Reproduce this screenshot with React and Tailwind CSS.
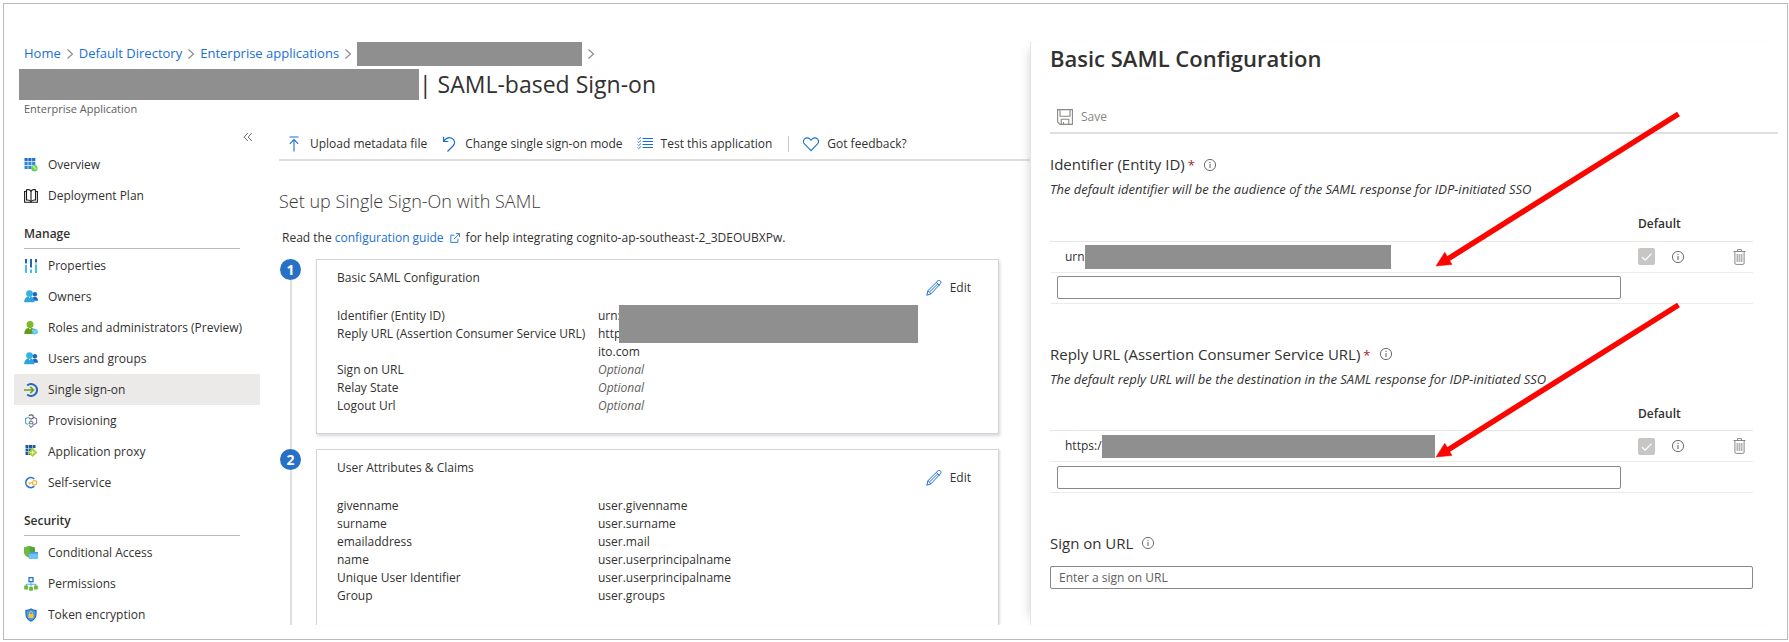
import React from "react";

const blue = "#1a6fd4";

function Redacted({ className }) {
  return <span aria-hidden="true" className={"block shrink-0 bg-[#8f8f8f] " + className} />;
}

function Chevron() {
  return (
    <svg className="h-3 w-2 shrink-0" viewBox="0 0 8 12" fill="none" stroke="#8a8886" strokeWidth="1.1" aria-hidden="true">
      <path d="M1.5 1.5 6.5 6l-5 4.5" />
    </svg>
  );
}

function Info() {
  return (
    <svg className="h-[14px] w-[14px] shrink-0" viewBox="0 0 14 14" fill="none" stroke="#605e5c" aria-hidden="true">
      <circle cx="7" cy="7" r="5.6" strokeWidth="0.9" />
      <path d="M7 6v4" strokeWidth="1" />
      <path d="M7 3.8v1.2" strokeWidth="1" />
    </svg>
  );
}

const svgProps = { className: "h-[14px] w-[14px] shrink-0", viewBox: "0 0 14 14", fill: "none", "aria-hidden": true };

const icons = {
  overview: (
    <svg {...svgProps}>
      <g fill="#1d6fd0">
        <rect x="0.5" y="0" width="3.2" height="3.2" /><rect x="4.3" y="0" width="3.2" height="3.2" /><rect x="8.1" y="0" width="3.2" height="3.2" />
      </g>
      <g fill="#2f86dd">
        <rect x="0.5" y="3.9" width="3.2" height="3.2" /><rect x="4.3" y="3.9" width="3.2" height="3.2" /><rect x="8.1" y="3.9" width="3.2" height="3.2" />
        <rect x="0.5" y="7.8" width="3.2" height="3.2" /><rect x="4.3" y="7.8" width="3.2" height="3.2" />
      </g>
      <circle cx="10.4" cy="10.2" r="3.2" fill="#5fcf6a" />
      <path d="m9.4 8.400 2.400 2.600" stroke="#c9f25c" strokeWidth="1.600" strokeLinecap="round" />
    </svg>
  ),
  plan: (
    <svg {...svgProps} stroke="#1b1a19" strokeWidth="1.1">
      <path d="M2.500.8c2-.4 3.700 0 4.500 1.300C7.800.8 9.500.4 11.500.8v10.200c-2-.2-3.500.2-4.500 1.600-1-1.400-2.500-1.800-4.500-1.600z" />
      <path d="M7 2.100v10.500M2.500 2.500H.6v10.800h12.800V2.500h-1.900" />
    </svg>
  ),
  properties: (
    <svg {...svgProps}>
      <g fill="#1f66b8">
        <rect x="1" y="0" width="2" height="4" /><rect x="6" y="0" width="2" height="8.5" /><rect x="11" y="0" width="2" height="3.5" />
      </g>
      <g fill="#46bfe6">
        <rect x="1" y="6" width="2" height="8" /><rect x="6" y="10.5" width="2" height="3.5" /><rect x="11" y="5.5" width="2" height="8.5" />
      </g>
      <rect x="1" y="4" width="2" height="1.2" fill="#8fc8ee" /><rect x="11" y="3.5" width="2" height="1.2" fill="#8fc8ee" />
    </svg>
  ),
  people: (
    <svg {...svgProps}>
      <circle cx="10.9" cy="4.3" r="2.2" fill="#1c66c4" />
      <path d="M7.8 10.800c0-2.600 1.200-4 3.100-4s3.100 1.600 3.100 4z" fill="#1c66c4" />
      <circle cx="5.500" cy="3.600" r="3.400" fill="#35b2e0" />
      <path d="M.2 12.200c0-3.600 2-5.600 5.300-5.600s5 2 5 5.600z" fill="#2fa3da" />
      <path d="m4.500 6.800 1 1.500 1-1.500z" fill="#dff4fd" />
    </svg>
  ),
  role: (
    <svg {...svgProps}>
      <circle cx="6" cy="3.600" r="3.500" fill="#7db928" />
      <path d="M.3 13c0-4.200 2.100-6.200 5.700-6.200s5.700 2 5.700 6.200z" fill="#5f9c1c" />
      <path d="m4.800 6.900 1.200 1.800 1.200-1.800z" fill="#e6f5cf" />
      <path d="M10.700 7.600 13.800 9v3l-3.100 1.800L7.900 12V9z" fill="#4fc3ea" />
      <path d="m7.900 9 2.900 1.500L13.800 9M10.800 10.500v3" stroke="#c9effb" strokeWidth="0.6" />
    </svg>
  ),
  sso: (
    <svg {...svgProps}>
      <path d="M3.2 2.400A6 6 0 1 1 3.200 11.600" stroke="#2b66bd" strokeWidth="2" />
      <path d="M0 7h9M6.300 3.900 9.500 7l-3.200 3.100" stroke="#6aa51f" strokeWidth="1.700" />
    </svg>
  ),
  provisioning: (
    <svg {...svgProps} strokeWidth="1.100">
      <path d="M4.800 3.200 1.600 4.600v4.600l2.200 1.200" stroke="#4aa7dc" />
      <path d="M9.800 3.200l2.800 1.600v4.400l-2.800 1.500H8.600" stroke="#8a6cb8" />
      <path d="M4.800 1.900c1.300-1.400 3.300-1.400 4.400 0v2.200L7 5.200 5 4.100" stroke="#4c6276" />
      <path d="M5.200 8.200 7 6.900l1.800 1.300v1.600H5.200z" stroke="#77777d" />
      <path d="M4.800 11.200 7 13.200l2.300-1.700" stroke="#4c9ba8" />
    </svg>
  ),
  proxy: (
    <svg {...svgProps}>
      <g fill="#1d5a9e">
        <rect x="1.500" y="0" width="3" height="3" /><rect x="5" y="0" width="3" height="3" /><rect x="8.500" y="0" width="3" height="3" />
        <rect x="1.500" y="3.500" width="3" height="3" /><rect x="5" y="3.500" width="3" height="3" />
        <rect x="1.500" y="7" width="3" height="3" /><rect x="5" y="7" width="3" height="3" />
      </g>
      <path d="m8.600 2.800 4.800 4.600-4.800 4.700-4.800-4.700z" fill="#a8cf3c" />
      <path d="M6.400 7.400h4.400M8.600 5.400v4.100" stroke="#eef8c8" strokeWidth="0.900" />
    </svg>
  ),
  selfservice: (
    <svg {...svgProps}>
      <path d="M10.300 3A5 5 0 1 0 10.300 10.200" stroke="#2f74c4" strokeWidth="1.600" />
      <circle cx="10.600" cy="6.700" r="2.100" stroke="#efb93d" strokeWidth="1.300" />
      <path d="M8.500 6.900H4.400M5.600 6.900v1.600" stroke="#efb93d" strokeWidth="1.300" />
    </svg>
  ),
  conditional: (
    <svg {...svgProps}>
      <path d="M5.500 0 11 1.600v4.200c0 3-2.400 4.700-5.500 6C2.400 10.500 0 8.800 0 5.800V1.600z" fill="#55a630" />
      <path d="M5.500 0v11.800C2.400 10.500 0 8.800 0 5.800V1.600z" fill="#6fbc3c" />
      <rect x="5" y="6" width="9" height="7" fill="#6cc4f4" />
      <rect x="5" y="6" width="9" height="1.800" fill="#4a9be0" />
    </svg>
  ),
  permissions: (
    <svg {...svgProps}>
      <rect x="5" y="0.700" width="4" height="4" stroke="#2370c8" strokeWidth="1.300" />
      <path d="M7 5v4.500M2.300 9V7.200h9.400V9" stroke="#49b8e8" strokeWidth="1.100" />
      <g fill="#6cbb32">
        <rect x="0.200" y="8.600" width="3.800" height="4" rx="0.600" /><rect x="5.100" y="9.800" width="3.800" height="4" rx="0.600" /><rect x="10" y="8.600" width="3.800" height="4" rx="0.600" />
      </g>
    </svg>
  ),
  token: (
    <svg {...svgProps}>
      <path d="M7 .2c1.500 1 3.300 1.500 5.600 1.500v4.600c0 3.400-2.400 5.900-5.600 7.500C3.800 12.200 1.400 9.700 1.400 6.300V1.700C3.700 1.700 5.500 1.200 7 .2z" fill="#1c68c0" />
      <path d="M7 1.500c1.200.8 2.700 1.200 4.500 1.300v3.600c0 2.700-1.900 4.700-4.500 6-2.600-1.300-4.500-3.300-4.500-6V2.800C4.300 2.700 5.800 2.300 7 1.500z" fill="#4a9be4" />
      <rect x="4.500" y="6" width="5" height="4" fill="#f5c63c" />
      <path d="M5.600 6V4.900a1.400 1.400 0 0 1 2.800 0V6" stroke="#f5c63c" strokeWidth="0.900" />
    </svg>
  ),
};

const topItems = [
  ["overview", "Overview"],
  ["plan", "Deployment Plan"],
];
const manageItems = [
  ["properties", "Properties"],
  ["people", "Owners"],
  ["role", "Roles and administrators (Preview)"],
  ["people", "Users and groups"],
  ["sso", "Single sign-on"],
  ["provisioning", "Provisioning"],
  ["proxy", "Application proxy"],
  ["selfservice", "Self-service"],
];
const securityItems = [
  ["conditional", "Conditional Access"],
  ["permissions", "Permissions"],
  ["token", "Token encryption"],
];

function NavList({ items }) {
  return (
    <ul>
      {items.map(([icon, label]) => (
        <li key={label}>
          <a
            href="#"
            aria-current={label === "Single sign-on" ? "page" : undefined}
            className={"flex h-[31px] items-center gap-[10px] pl-[10px] " + (label === "Single sign-on" ? "bg-[#ebeae9]" : "")}
          >
            {icons[icon]}
            <span className="whitespace-nowrap">{label}</span>
          </a>
        </li>
      ))}
    </ul>
  );
}

function NavHeading({ children }) {
  return <h2 className="ml-[10px] mr-5 mt-[15px] mb-[1px] h-[23px] border-b border-[#bdbbb9] font-semibold leading-4">{children}</h2>;
}

function Sidebar() {
  return (
    <nav className="-mb-2 w-[246px] shrink-0">
      <div className="flex h-[21px] items-start justify-end pr-[7px] pt-1">
        <button type="button" aria-label="Collapse menu">
          <svg className="h-[10px] w-[10px]" viewBox="0 0 10 10" fill="none" stroke="#605e5c" strokeWidth="0.900">
            <path d="M4.800 1 1.200 5l3.600 4M8.800 1 5.200 5l3.600 4" />
          </svg>
        </button>
      </div>
      <NavList items={topItems} />
      <NavHeading>Manage</NavHeading>
      <NavList items={manageItems} />
      <NavHeading>Security</NavHeading>
      <NavList items={securityItems} />
    </nav>
  );
}

function CommandBar() {
  return (
    <div className="flex h-[33px] items-center border-b-2 border-[#e1dfdd] whitespace-nowrap">
      <button type="button" className="flex items-center gap-2 pl-[7px]">
        <svg className="h-4 w-4" viewBox="0 0 16 16" fill="none" stroke={blue} strokeWidth="1.100" aria-hidden="true">
          <path d="M3.500 1h9M8 15.500V3.600M3.800 7.800 8 3.600l4.200 4.200" />
        </svg>
        Upload metadata file
      </button>
      <button type="button" className="ml-[14px] flex items-center gap-2">
        <svg className="h-4 w-4" viewBox="0 0 16 16" fill="none" stroke={blue} strokeWidth="1.200" aria-hidden="true">
          <path d="M2.600.8v4.700h4.800M2.800 5.300C5 2 8 .9 10.800 2.200c3 1.500 3.600 4.900 1.600 7.300L6.500 15.500" />
        </svg>
        Change single sign-on mode
      </button>
      <button type="button" className="ml-[14px] flex items-center gap-2">
        <svg className="h-4 w-4" viewBox="0 0 16 16" fill="none" stroke={blue} strokeWidth="1.100" aria-hidden="true">
          <path d="M5.500 2.500H16M5.500 5.500H16M5.500 8.500H16M5.500 11.500H16" strokeWidth="1.200" />
          <path d="m.5 2.300 1.200 1L4 1.300M.5 5.500l1.200 1L4 4.500M.5 8.500l1.200 1L4 7.500M.5 11.500l1.200 1L4 10.500" strokeWidth="0.900" />
        </svg>
        Test this application
      </button>
      <span className="ml-4 h-4 w-px bg-[#c8c6c4]" />
      <button type="button" className="ml-[14px] flex items-center gap-2">
        <svg className="h-4 w-4" viewBox="0 0 16 16" fill="none" stroke={blue} strokeWidth="1.100" aria-hidden="true">
          <path d="M8 14.600 1.700 8.200C.2 6.600.2 4.300 1.600 2.900 3 1.500 5.300 1.500 6.700 2.900L8 4.200l1.300-1.300c1.400-1.400 3.700-1.400 5.100 0 1.400 1.400 1.400 3.700-.1 5.300z" />
        </svg>
        Got feedback?
      </button>
    </div>
  );
}

function EditButton() {
  return (
    <button type="button" className="mt-[10px] flex h-4 items-center gap-2">
      <svg className="h-4 w-4" viewBox="0 0 16 16" fill="none" stroke={blue} strokeWidth="1" aria-hidden="true">
        <path d="m.8 15.200 1.200-4.600L11.800.9c.8-.7 1.900-.6 2.600.1s.8 1.900.1 2.600L4.900 13.900zM2 10.600l2.900 3.300M10.300 2.400l3.200 3.100M3.600 11.900l8.200-8.100" />
      </svg>
      Edit
    </button>
  );
}

function Step({ number, title, children, last }) {
  return (
    <li className="flex">
      <div className="flex w-[23px] shrink-0 flex-col items-center">
        <span className="flex h-[21px] w-[21px] shrink-0 items-center justify-center rounded-full bg-[#2670c6] text-sm font-bold text-white">
          {number}
        </span>
        <span className="w-[2px] flex-1 bg-[#e1dfdd]" />
      </div>
      <div className={"min-w-0 flex-1 pl-[14px] " + (last ? "" : "pb-[15px]")}>
        <section
          className={
            "border border-[#d4d4d8] pl-5 pr-[27px] pt-[10px] " +
            (last ? "border-b-0 pb-5 shadow-[2px_0_2px_-1px_rgba(100,100,130,0.25)]" : "pb-[18px] shadow-[1px_2px_3px_rgba(100,100,130,0.25)]")
          }
        >
          <div className="flex h-[37px] items-start justify-between">
            <h3 className="leading-4">{title}</h3>
            <EditButton />
          </div>
          {children}
        </section>
      </div>
    </li>
  );
}

function Pair({ name, value, optional }) {
  return (
    <div className="flex leading-[18px]">
      <dt className="w-[261px] shrink-0">{name}</dt>
      <dd className={optional ? "italic text-[#605e5c]" : ""}>{value}</dd>
    </div>
  );
}

const claims = [
  ["givenname", "user.givenname"],
  ["surname", "user.surname"],
  ["emailaddress", "user.mail"],
  ["name", "user.userprincipalname"],
  ["Unique User Identifier", "user.userprincipalname"],
  ["Group", "user.groups"],
];

function Main() {
  return (
    <main className="min-w-0 flex-1 pl-[19px]">
      <CommandBar />
      <div className="pr-[31px]">
        <h2 className="mt-[26px] text-lg font-light leading-7 text-[#3b3a39]">Set up Single Sign-On with SAML</h2>
        <p className="mt-[15px] flex items-center pl-[3px] leading-4 whitespace-nowrap">
          Read the&nbsp;
          <a href="#" className="flex items-center gap-[6px] text-[#1a6fd4]">
            configuration guide
            <svg className="h-[10px] w-[10px]" viewBox="0 0 10 10" fill="none" stroke={blue} strokeWidth="0.900" aria-hidden="true">
              <path d="M4.500 2.200H.8v7.200h7.100V5.800M6 .6h3.500v3.500M9.300.8 4 6.100" />
            </svg>
          </a>
          <span className="pl-[6px]">for help integrating cognito-ap-southeast-2_3DEOUBXPw.</span>
        </p>
        <ol className="mt-[13px]">
          <Step number="1" title="Basic SAML Configuration">
            <dl className="relative">
              <Pair name="Identifier (Entity ID)" value="urn:" />
              <Pair name="Reply URL (Assertion Consumer Service URL)" value={<>http<br />ito.com</>} />
              <Pair name="Sign on URL" value="Optional" optional />
              <Pair name="Relay State" value="Optional" optional />
              <Pair name="Logout Url" value="Optional" optional />
              <Redacted className="absolute left-[282px] top-[-2px] h-[38px] w-[299px]" />
            </dl>
          </Step>
          <Step number="2" title="User Attributes &amp; Claims" last>
            <dl>
              {claims.map(([name, value]) => (
                <Pair key={name} name={name} value={value} />
              ))}
            </dl>
          </Step>
        </ol>
      </div>
    </main>
  );
}

function Field({ id, label, required }) {
  return (
    <div className="flex items-center gap-2 leading-5">
      <label htmlFor={id} className="text-[15px]">
        {label}
        {required && <span className="ml-[3px] text-[13px] text-[#a4262c]">*</span>}
      </label>
      <Info />
    </div>
  );
}

function UrlGroup({ id, label, hint, prefix, block }) {
  return (
    <div>
      <Field id={id} label={label} required />
      <p className="mt-[6px] text-[13px] italic leading-4">{hint}</p>
      <table className="mt-[19px] w-full table-fixed border-collapse">
        <colgroup>
          <col />
          <col className="w-[74px]" />
          <col className="w-[58px]" />
        </colgroup>
        <thead>
          <tr className="h-[25px] border-b border-[#e6e5e4] align-top">
            <th />
            <th className="p-0 pl-[17px] text-left align-top font-semibold leading-4">Default</th>
            <th />
          </tr>
        </thead>
        <tbody>
          <tr className="h-[31px] border-b border-[#edecea]">
            <td className="p-0 pl-[15px]">
              <div className="flex items-center">
                {prefix}
                <Redacted className={block} />
              </div>
            </td>
            <td className="p-0 pl-[17px]">
              <div className="flex items-center gap-4">
                <span className="relative block h-[17px] w-[17px] shrink-0">
                  <input
                    type="checkbox"
                    aria-label="Default"
                    defaultChecked
                    disabled
                    className="block h-[17px] w-[17px] appearance-none rounded-[2px] bg-[#c8c6c4]"
                  />
                  <svg className="pointer-events-none absolute inset-0 h-[17px] w-[17px]" viewBox="0 0 17 17" fill="none" stroke="#fff" strokeWidth="1.200" aria-hidden="true">
                    <path d="m4 9 3.200 3.200L13.500 5.600" />
                  </svg>
                </span>
                <Info />
              </div>
            </td>
            <td className="p-0 pr-[7px]">
              <button type="button" aria-label="Delete" className="ml-auto block">
                <svg className="h-4 w-[13px]" viewBox="0 0 13 16" fill="none" stroke="#8a8886" strokeWidth="1" aria-hidden="true">
                  <path d="M.5 2.500h12M4.500 2.500V.6h4v1.900M1.900 2.500v11.600c0 .8.4 1.300 1.200 1.300h6.800c.8 0 1.200-.5 1.200-1.300V2.500" />
                  <path d="M4.300 5v8M6.500 5v8M8.700 5v8" strokeWidth="1.600" stroke="#b3b1af" />
                </svg>
              </button>
            </td>
          </tr>
          <tr className="h-[31px] border-b border-[#edecea]">
            <td className="p-0 pl-[7px]">
              <input id={id} type="text" className="block h-[23px] w-full rounded-[2px] border border-[#8a8886] px-2" />
            </td>
            <td className="p-0" />
            <td className="p-0" />
          </tr>
        </tbody>
      </table>
    </div>
  );
}

function Arrow({ className }) {
  return (
    <svg className={"pointer-events-none absolute h-[157px] w-[246px] " + className} viewBox="0 0 246 157" aria-hidden="true">
      <path d="M243.500 3 12 148.500" stroke="#fa0500" strokeWidth="5.500" fill="none" />
      <path d="M1 155 9.800 141.200 17 153.500z" fill="#fa0500" stroke="#fa0500" strokeWidth="0.500" />
    </svg>
  );
}

function Panel() {
  return (
    <aside className="relative min-w-0 border-l border-[#e4e3e2] pl-[19px] pr-[9px] pb-9 shadow-[-8px_0_10px_-8px_rgba(0,0,0,0.18)]">
      <h2 className="text-[22px] font-semibold leading-8">Basic SAML Configuration</h2>
      <div className="mt-7 flex h-[32px] items-center border-b-2 border-[#e1dfdd] pb-[1px] pl-[7px]">
        <button type="button" disabled className="flex items-center gap-2 text-[#8a8886]">
          <svg className="h-4 w-4" viewBox="0 0 16 16" fill="none" stroke="#8a8886" strokeWidth="1.100" aria-hidden="true">
            <path d="M.6.600h14.800v14.800H3L.6 13zM3 .6v6.600h10V.6M4.200 15.400v-5.200h7.600v5.200M6.500 15.400v-2.500" />
          </svg>
          Save
        </button>
      </div>
      <div className="mt-5 pr-[25px]">
        <UrlGroup
          id="identifier"
          label="Identifier (Entity ID)"
          hint="The default identifier will be the audience of the SAML response for IDP-initiated SSO"
          prefix="urn:"
          block="-ml-[3px] h-6 w-[306px]"
        />
        <div className="h-10" />
        <UrlGroup
          id="reply-url"
          label="Reply URL (Assertion Consumer Service URL)"
          hint="The default reply URL will be the destination in the SAML response for IDP-initiated SSO"
          prefix="https:/"
          block="h-[23px] w-[333px]"
        />
        <div className="h-10" />
        <Field id="sign-on-url" label="Sign on URL" />
        <input
          id="sign-on-url"
          type="text"
          placeholder="Enter a sign on URL"
          className="mt-[13px] block h-[23px] w-full rounded-[2px] border border-[#8a8886] px-2 placeholder:text-[#605e5c]"
        />
      </div>
      <Arrow className="left-[404px] top-[69px]" />
      <Arrow className="left-[404px] top-[260px]" />
    </aside>
  );
}

export default function App() {
  return (
    <div className="bg-white py-[3px] pl-[3px] pr-px font-['Open_Sans','Noto_Sans',sans-serif] text-xs text-[#323130]">
      <div className="grid grid-cols-[1026fr_757fr] overflow-hidden border border-[#b9b9b9] pb-[14px] pt-[38px]">
        <div className="min-w-0">
          <nav aria-label="Breadcrumb" className="flex h-6 items-center gap-[5px] pl-5 text-[13px] text-[#1a6fd4] whitespace-nowrap">
            <a href="#">Home</a>
            <Chevron />
            <a href="#">Default Directory</a>
            <Chevron />
            <a href="#">Enterprise applications</a>
            <Chevron />
            <Redacted className="h-6 w-[225px]" />
            <Chevron />
          </nav>
          <h1 className="mt-[3px] flex h-[31px] items-center pl-[15px] text-[23px] whitespace-nowrap">
            <Redacted className="h-[31px] w-[400px]" />
            <span>| SAML-based Sign-on</span>
          </h1>
          <p className="mt-[1px] pl-5 text-[11px] leading-4 text-[#605e5c]">Enterprise Application</p>
          <div className="mt-[11px] flex pl-[10px]">
            <Sidebar />
            <Main />
          </div>
        </div>
        <Panel />
      </div>
    </div>
  );
}
